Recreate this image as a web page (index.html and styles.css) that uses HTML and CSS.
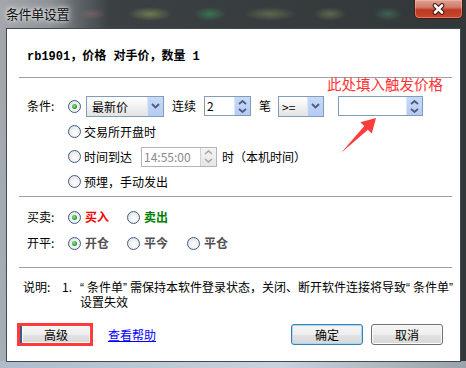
FILE: index.html
```html
<!DOCTYPE html>
<html lang="zh-CN">
<head>
<meta charset="utf-8">
<title>条件单设置</title>
<link rel="stylesheet" href="styles.css">
</head>
<body>
<div class="window">
  <div class="titlebar">
    <div class="title">条件单设置</div>
    <div class="close">
      <svg width="13" height="12" viewBox="0 0 13 12"><path d="M3 2.5 L10 9.5 M10 2.5 L3 9.5" stroke="#3b1710" stroke-width="4.6" stroke-linecap="round"/><path d="M3 2.5 L10 9.5 M10 2.5 L3 9.5" stroke="#fff" stroke-width="2.6" stroke-linecap="round"/></svg>
    </div>
  </div>
  <div class="client">
    <div class="header">rb1901，价格 对手价，数量 1</div>
    <div class="sep"></div>
    <div class="section cond">
      <div class="row">
        <span class="label">条件:</span>
        <span class="radio on"></span>
        <div class="combo c-src">
          <span class="val">最新价</span>
          <span class="drop"><svg width="9" height="6" viewBox="0 0 9 6"><path d="M1 1 L4.5 4.5 L8 1" fill="none" stroke="#4a5d80" stroke-width="1.8"/></svg></span>
        </div>
        <span class="txt t-lx">连续</span>
        <div class="spin s-cnt">
          <span class="val">2</span>
          <span class="spinbtn">
            <svg width="9" height="5" viewBox="0 0 9 5"><path d="M1 4 L4.5 1 L8 4" fill="none" stroke="#4a5d80" stroke-width="1.8"/></svg>
            <svg width="9" height="5" viewBox="0 0 9 5"><path d="M1 1 L4.5 4 L8 1" fill="none" stroke="#4a5d80" stroke-width="1.8"/></svg>
          </span>
        </div>
        <span class="txt t-bi">笔</span>
        <div class="combo c-op">
          <span class="val">&gt;=</span>
          <span class="drop"><svg width="9" height="6" viewBox="0 0 9 6"><path d="M1 1 L4.5 4.5 L8 1" fill="none" stroke="#4a5d80" stroke-width="1.8"/></svg></span>
        </div>
        <div class="spin s-price">
          <span class="val"></span>
          <span class="spinbtn">
            <svg width="9" height="5" viewBox="0 0 9 5"><path d="M1 4 L4.5 1 L8 4" fill="none" stroke="#4a5d80" stroke-width="1.8"/></svg>
            <svg width="9" height="5" viewBox="0 0 9 5"><path d="M1 1 L4.5 4 L8 1" fill="none" stroke="#4a5d80" stroke-width="1.8"/></svg>
          </span>
        </div>
      </div>
      <div class="row indent">
        <span class="radio"></span>
        <span class="txt t-opt">交易所开盘时</span>
      </div>
      <div class="row indent">
        <span class="radio"></span>
        <span class="txt t-opt">时间到达</span>
        <div class="spin s-time disabled">
          <span class="val">14:55:00</span>
          <span class="spinbtn">
            <svg width="9" height="5" viewBox="0 0 9 5"><path d="M1 4 L4.5 1 L8 4" fill="none" stroke="#a8a8a8" stroke-width="1.6"/></svg>
            <svg width="9" height="5" viewBox="0 0 9 5"><path d="M1 1 L4.5 4 L8 1" fill="none" stroke="#a8a8a8" stroke-width="1.6"/></svg>
          </span>
        </div>
        <span class="txt t-local">时（本机时间）</span>
      </div>
      <div class="row indent">
        <span class="radio"></span>
        <span class="txt t-opt">预埋，手动发出</span>
      </div>
    </div>
    <div class="sep"></div>
    <div class="section trade">
      <div class="row">
        <span class="label">买卖:</span>
        <span class="opt"><span class="radio on"></span><span class="otext buy">买入</span></span>
        <span class="opt"><span class="radio"></span><span class="otext sell">卖出</span></span>
      </div>
      <div class="row">
        <span class="label">开平:</span>
        <span class="opt"><span class="radio on"></span><span class="otext gray">开仓</span></span>
        <span class="opt wide"><span class="radio"></span><span class="otext gray">平今</span></span>
        <span class="opt"><span class="radio"></span><span class="otext gray">平仓</span></span>
      </div>
    </div>
    <div class="sep"></div>
    <div class="desc">
      <span class="k">说明:</span>
      <span class="n">1.</span>
      <span class="t"><span class="line"><span class="q">“</span>条件单<span class="q">”</span>需保持本软件登录状态，关闭、断开软件连接将导致<span class="q">“</span>条件单<span class="q">”</span></span><span class="line">设置失效</span></span>
    </div>
    <div class="btnrow">
      <span class="mark"><button class="btn adv">高级</button></span>
      <span class="link">查看帮助</span>
      <span class="spacer"></span>
      <button class="btn ok">确定</button>
      <button class="btn cancel">取消</button>
    </div>

    <div class="hint">此处填入触发价格</div>
    <svg class="arrow" width="52" height="45" viewBox="0 0 52 45"><polygon points="46,6 41.8,21.6 37.9,17.7 11,41 34.3,14.1 30.4,10.2" fill="#ff3b3b"/></svg>
  </div>
</div>
</body>
</html>
```

FILE: styles.css
```css
* { box-sizing: border-box; }
html, body { margin: 0; padding: 0; }
body {
  width: 466px;
  height: 368px;
  overflow: hidden;
  font-family: "Noto Sans CJK SC", sans-serif;
  font-size: 12px;
  line-height: 14px;
  color: #000;
  background: #2f3438;
}
.window {
  width: 466px;
  height: 368px;
  display: flex;
  flex-direction: column;
  background:
    linear-gradient(to right, #aebccb, #c9d3dd 60%, #9aa3ab) bottom / 100% 7px no-repeat,
    radial-gradient(ellipse 14px 6px at 92px 14px, rgba(150,110,110,.45), transparent),
    radial-gradient(ellipse 22px 7px at 150px 14px, rgba(150,170,90,.55), transparent),
    radial-gradient(ellipse 16px 7px at 210px 14px, rgba(60,150,90,.6), transparent),
    radial-gradient(ellipse 26px 7px at 270px 14px, rgba(120,140,90,.55), transparent),
    radial-gradient(ellipse 16px 7px at 330px 14px, rgba(130,150,90,.5), transparent),
    radial-gradient(ellipse 14px 7px at 388px 14px, rgba(70,140,100,.5), transparent),
    linear-gradient(to bottom, rgba(0,0,0,0) 30px, rgba(170,190,210,.35) 100%) left / 6px 100% no-repeat,
    linear-gradient(to right, #a3a7ab 0, #8d9296 50px, #5d6266 80px, #3b4043 110px, #323739 100%);
}
.titlebar {
  height: 28px;
  flex: none;
  display: flex;
  align-items: flex-start;
  justify-content: space-between;
  padding-left: 6px;
}
.title {
  margin-top: 6px;
  font-size: 13px;
  line-height: 16px;
  color: #111;
  letter-spacing: -0.4px;
  text-shadow: 0 0 4px #fff, 0 0 8px rgba(255,255,255,.8);
}
.close {
  width: 49px;
  height: 19px;
  margin-right: 3px;
  border: 1px solid #4a1a12;
  border-top: none;
  border-radius: 0 0 5px 5px;
  background: linear-gradient(#dea092 0, #d27c6a 40%, #bb3a22 55%, #c7482e 100%);
  box-shadow: inset 0 0 0 1px rgba(255,220,210,.35);
  display: flex;
  align-items: center;
  justify-content: center;
}
.client {
  position: relative;
  margin: 0 5px 6px 6px;
  height: 334px;
  flex: none;
  background: #fff;
  border: 1px solid #3f4a52;
  padding: 0 8px 0 12px;
  display: flex;
  flex-direction: column;
}
.header {
  height: 48px;
  padding: 21px 0 0 8px;
  font-family: "Liberation Mono", "Noto Sans CJK SC", monospace;
  font-weight: bold;
  font-size: 12px;
  line-height: 14px;
}
.sep {
  height: 1px;
  flex: none;
  background: #a0a0a0;
}
.section { padding-left: 8px; }
.cond { padding-top: 15px; padding-bottom: 2px; }
.cond .row { height: 25px; }
.cond .row:first-child { height: 26px; }
.trade { padding-top: 7px; padding-bottom: 11px; }
.trade .row { height: 26px; }
.row {
  display: flex;
  align-items: center;
}
.row.indent { padding-left: 41px; }
.label { width: 41px; flex: none; }
.radio {
  position: relative;
  width: 13px;
  height: 13px;
  flex: none;
  border-radius: 50%;
  border: 1px solid #3f5d85;
  background: radial-gradient(circle at 55% 60%, #ffffff 0, #f4f4f4 35%, #d5d8dc 100%);
}
.radio.on::after {
  content: "";
  position: absolute;
  left: 3px;
  top: 3px;
  width: 5px;
  height: 5px;
  border-radius: 50%;
  background: radial-gradient(circle at 40% 40%, #8fe08f 0, #2aa52a 60%, #1a7f1a 100%);
}
.combo {
  height: 21px;
  flex: none;
  display: flex;
  border: 1px solid #7f9db9;
  background: linear-gradient(#ffffff 0, #f3f3f3 45%, #e3e3e3 100%);
}
.combo .val { flex: 1; padding-left: 4px; line-height: 19px; }
.combo .drop, .spin .spinbtn {
  width: 16px;
  flex: none;
  background: linear-gradient(#c8daf9, #b5cbf3);
  border-left: 1px solid #dbe6fb;
  display: flex;
  align-items: center;
  justify-content: center;
}
.spin .spinbtn {
  flex-direction: column;
  gap: 3px;
}
.spin .spinbtn svg { display: block; }
.c-src { width: 78px; margin-left: 5px; }
.c-src .val { padding-left: 5px; }
.c-op { width: 46px; margin-left: 7px; }
.c-op .val { padding-left: 3px; }
.spin {
  height: 20px;
  flex: none;
  display: flex;
  border: 1px solid #7f9db9;
  background: #fff;
}
.spin .val { flex: 1; padding-left: 2px; line-height: 18px; }
.s-cnt { width: 47px; margin-left: 8px; }
.s-price { width: 85px; margin-left: 14px; }
.s-time { width: 76px; margin-left: 9px; }
.spin.disabled { border-color: #b4b4b4; }
.spin.disabled .val { color: #8a8a8a; }
.spin.disabled .spinbtn {
  background: linear-gradient(#f4f4f4, #e6e6e6);
  border-left: 1px solid #d0d0d0;
}
.t-lx { margin-left: 8px; }
.t-bi { margin-left: 8px; }
.t-opt { margin-left: 3px; }
.t-local { margin-left: 5px; }
.opt {
  width: 59px;
  flex: none;
  display: flex;
  align-items: center;
}
.opt.wide { width: 60px; }
.otext { margin-left: 4px; font-weight: bold; }
.buy { color: #ff0000; }
.sell { color: #008000; }
.gray { color: #505050; }
.desc {
  display: flex;
  padding: 12px 0 0 4px;
  line-height: 14px;
}
.desc .k { width: 39px; flex: none; }
.desc .n { width: 18px; flex: none; }
.desc .t { display: flex; flex-direction: column; }
.desc .line { display: block; white-space: nowrap; }
.desc .q {
  font-family: "Liberation Sans", sans-serif;
  letter-spacing: 3px;
}
.btnrow {
  display: flex;
  align-items: center;
  margin-top: 14px;
  height: 23px;
}
.btn {
  width: 72px;
  height: 21px;
  flex: none;
  padding: 0;
  font-family: "Noto Sans CJK SC", sans-serif;
  font-size: 12px;
  color: #000;
  border: 1px solid #707070;
  border-radius: 3px;
  background: linear-gradient(#f6f6f6 0, #eeeeee 50%, #e2e2e2 51%, #d8d8d8 100%);
  box-shadow: inset 0 0 0 1px #fbfbfb;
}
.mark {
  display: flex;
  margin-left: -2px;
  border: 3px solid #ff3b3b;
}
.btn.adv {
  width: 70px;
  height: 17px;
  border-radius: 0;
  border-top: none;
  border-right: none;
  border-bottom: none;
  border-left: 2px solid #3c5a86;
  line-height: 15px;
}
.link {
  margin-left: 15px;
  color: #0000ff;
  text-decoration: underline;
}
.spacer { flex: 1; }
.ok {
  border-color: #3c7fb1;
  box-shadow: inset 0 0 0 1px #a6d8f2;
}
.cancel { margin-left: 8px; margin-right: 9px; }
.hint {
  position: absolute;
  left: 320px;
  top: 47px;
  font-size: 14.5px;
  line-height: 15px;
  color: #ff3333;
  white-space: nowrap;
}
.arrow {
  position: absolute;
  left: 323px;
  top: 83px;
}
```
